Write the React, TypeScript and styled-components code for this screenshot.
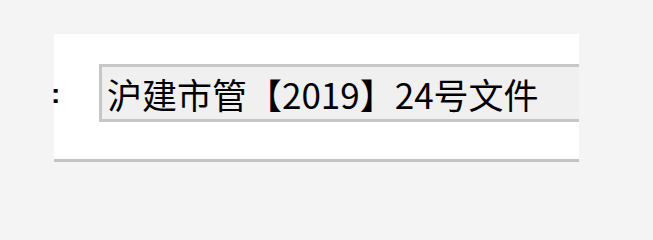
import React from "react";
import styled, { createGlobalStyle } from "styled-components";

const GlobalStyle = createGlobalStyle`
  html, body {
    margin: 0;
    padding: 0;
    background: #f4f4f4;
  }
`;

const Page = styled.div`
  padding: 34px 0 0 54px;
`;

const Panel = styled.div`
  width: 525px;
  height: 128px;
  box-sizing: border-box;
  background: #ffffff;
  border-bottom: 3px solid #c4c4c4;
  box-shadow: 0 6px 0 #e8e8e8;
  padding-top: 30px;
`;

const FieldRow = styled.div`
  display: flex;
  align-items: center;
  width: calc(100% + 3px);
  overflow: hidden;
  height: 58px;
  margin-left: -3px;
`;

const Label = styled.span`
  flex: none;
  width: 48px;
  font-family: "Liberation Sans", Arial, sans-serif;
  font-weight: bold;
  font-size: 28px;
  color: #000;
  line-height: 1;
  padding-top: 2px;
`;

const TextBox = styled.input`
  flex: none;
  width: 520px;
  height: 58px;
  box-sizing: border-box;
  border: 3px solid #c6c6c6;
  border-right: none;
  background: #f0f0f0;
  padding: 0 0 0 5px;
  margin: 0;
  font-family: "Noto Sans CJK SC", "Noto Sans", sans-serif;
  font-size: 35px;
  color: #000;
  outline: none;
`;

export default function App() {
  return (
    <>
      <GlobalStyle />
      <Page>
        <Panel>
          <FieldRow>
            <Label>:</Label>
            <TextBox readOnly defaultValue="沪建市管【2019】24号文件" />
          </FieldRow>
        </Panel>
      </Page>
    </>
  );
}
